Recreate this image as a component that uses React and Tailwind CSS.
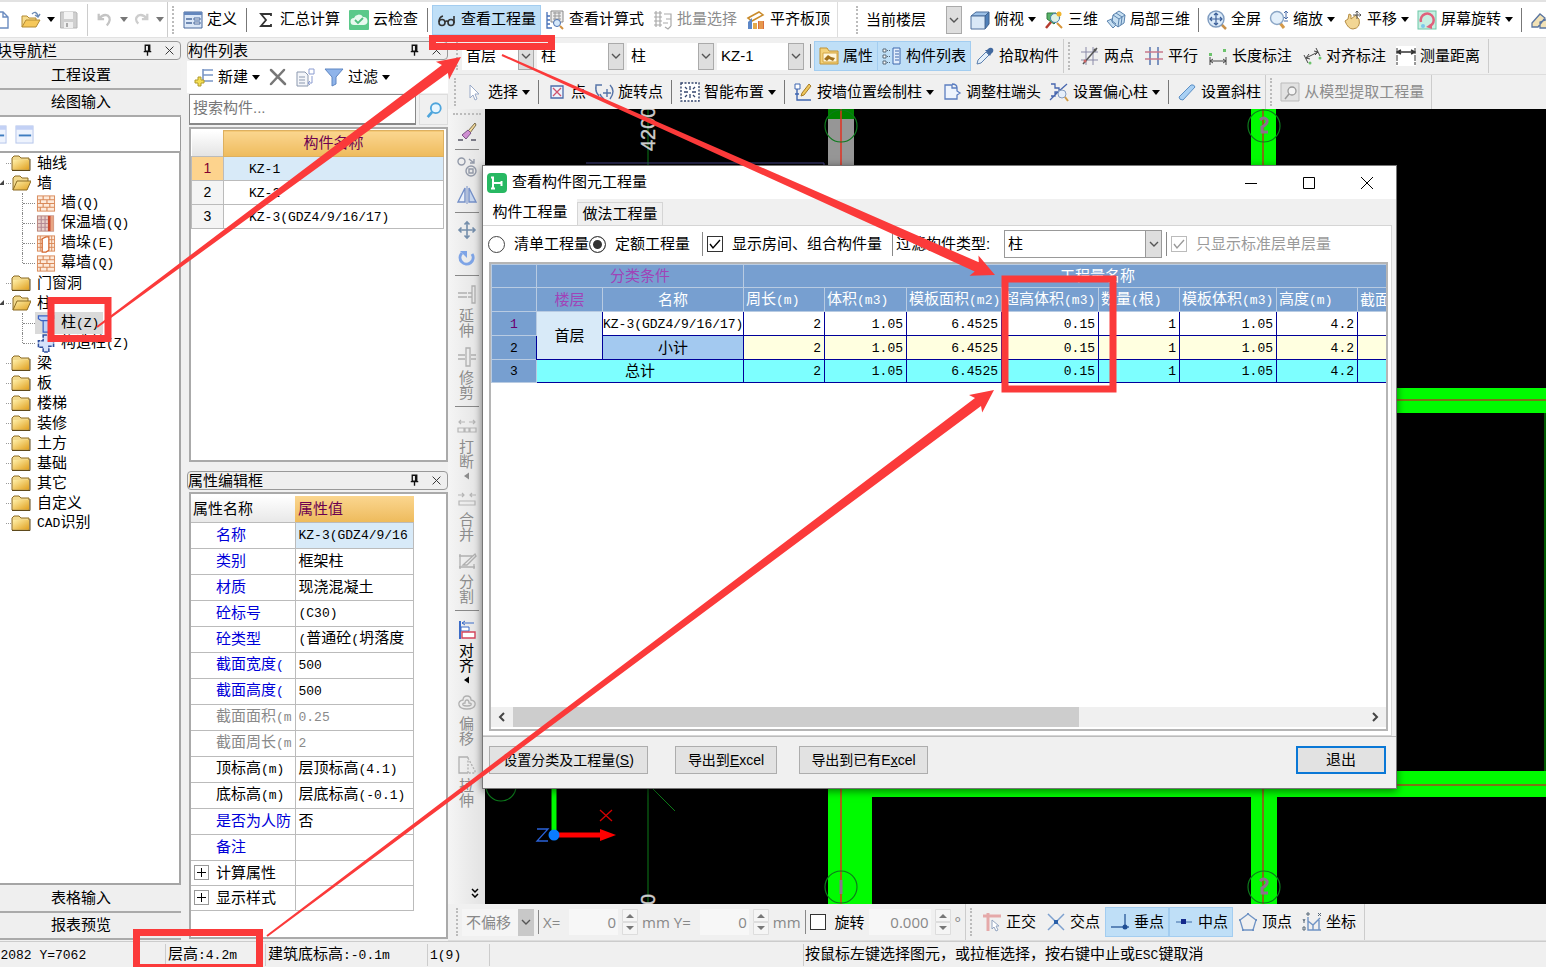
import clsx from 'clsx'

const CJK = 'font-["Liberation_Sans","Noto_Sans_CJK_SC",sans-serif]'
const RED = '#fb3a3a'

// All tool icons are drawn on a 20x20 grid
const ICONS = {
  doc: <path d="M3 2h10l5 5v11H3z M13 2v5h5" fill="#fff" stroke="#6b8cc0" strokeWidth="1.4" />,
  open: (
    <>
      <path d="M1 17V6h5l2 2h7v3" fill="#f7dc8d" stroke="#b48b32" />
      <path d="M1 17l4-7h14l-4 7z" fill="#f6c85a" stroke="#b48b32" />
      <path d="M11 4q4-4 6 2m-3-1l3 2 2-3" fill="none" stroke="#6b8ab5" strokeWidth="1.4" />
    </>
  ),
  save: (
    <>
      <path d="M1.500 2h15l1.500 1v15h-16.500z" fill="#cfcfcf" stroke="#b5b5b5" />
      <path d="M5 2h9v7H5z" fill="#f3f3f3" />
      <path d="M5 12h9v6H5z" fill="#efefef" />
      <path d="M7 13h2v4H7z" fill="#aaa" />
    </>
  ),
  undo: <path d="M3 3v6h6M4 8q4-5 9-3 5 4-1 11" fill="none" stroke="#c4c4c4" strokeWidth="2.500" />,
  redo: <path d="M17 3v6h-6M16 8q-4-5-9-3-5 4 0 9" fill="none" stroke="#cdcdcd" strokeWidth="2.500" />,
  define: (
    <>
      <path d="M1 2h18v16H1z" fill="#dce8f8" stroke="#49699c" />
      <path d="M1 2h18v3H1z" fill="#6487bd" />
      <path d="M3 9h6M3 13h6" stroke="#49699c" strokeWidth="1.500" />
      <path d="M11 8h6v2h-6zM11 12h6v2h-6z" fill="#fff" stroke="#49699c" />
    </>
  ),
  sigma: <path d="M15 6V4H5l5 6-5 6h10v-2" fill="none" stroke="#333" strokeWidth="1.800" />,
  cloud: (
    <>
      <rect width="20" height="20" rx="1" fill="#5bc98a" />
      <path d="M5 15a3.500 3.500 0 0 1 0-7 5 5 0 0 1 9-1 4 4 0 0 1 1 8z" fill="#e9f9ef" />
      <path d="M6 10l3 3 5-5" fill="none" stroke="#4fbf7f" strokeWidth="1.800" />
    </>
  ),
  glasses: (
    <g fill="none" stroke="#333" strokeWidth="1.600">
      <circle cx="5" cy="12.500" r="3" /><circle cx="14" cy="12.500" r="3" />
      <path d="M2 12q0-5 4-6M8 12q2-2 3 0M17 13V6" />
    </g>
  ),
  calc: (
    <>
      <path d="M6 1h12v11H6z" fill="#eee" stroke="#888" />
      <path d="M8 3h8M8 6h8M8 9h8M10 2v9M14 2v9" stroke="#999" />
      <path d="M2 2v16h5M2 6h3M2 10h3M2 14h3" fill="none" stroke="#4670b8" strokeWidth="1.300" />
      <circle cx="12" cy="13" r="3.500" fill="#d5e8fa" stroke="#4a70b0" /><path d="M15 16l3 3" stroke="#d09040" strokeWidth="2" />
    </>
  ),
  batch: <path d="M1 3h8M1 7h8M1 11h8M1 15h8M3 1v16M7 1v16M11 4h7v12m-5-7h5m-8 4h5m-3 4l3 2 3-3" fill="none" stroke="#aaa" strokeWidth="1.200" />,
  slab: (
    <>
      <path d="M2 8l11-6 4 3-11 6z" fill="#fff" stroke="#c98b2c" strokeWidth="1.500" />
      <path d="M2 12l4-4v11H2z" fill="#5c87c8" />
      <path d="M7 13h4v6H7z" fill="#e5a84a" /><path d="M12 11h6v8h-6z" fill="#d96e3d" /><path d="M14 11v8M16 11v8" stroke="#f2c25e" />
    </>
  ),
  cube: (
    <>
      <path d="M1 6l5-4h13l-4 4z" fill="#9cc0e6" stroke="#4c6f9c" />
      <path d="M15 6l4-4v12l-4 5z" fill="#4f7fb8" stroke="#3f628e" />
      <path d="M1 6h14v13H1z" fill="#d9e8f7" stroke="#4c6f9c" />
    </>
  ),
  view3d: (
    <>
      <path d="M3 3h9l4 5-6 6-7-5z" fill="#58b368" stroke="#2f7a3e" />
      <circle cx="11" cy="8" r="4.500" fill="#dff2e3" stroke="#4b7fb3" />
      <circle cx="15" cy="4" r="2.500" fill="#f0b52e" /><path d="M7 12l-5 6" stroke="#b63b2e" strokeWidth="2.500" /><path d="M13 13l5 5" stroke="#d79438" strokeWidth="2" />
    </>
  ),
  part3d: (
    <g stroke="#5b83ae" fill="#c6dff2">
      <path d="M1 11l7-3 5 4-6 6z" /><path d="M7 5l6-4 6 4-1 8-6 4-6-5z" /><path d="M7 5l6 4 6-4M13 9l-1 8M10 3l6 4-1 8M4 9l6 5" fill="none" />
    </g>
  ),
  full: (
    <>
      <path d="M14 14l5 5" stroke="#c8914b" strokeWidth="2.500" />
      <circle cx="9" cy="9" r="8" fill="#dcebf9" stroke="#7f9cc0" strokeWidth="1.400" />
      <path d="M9 3v12M3 9h12M7 5l2-2 2 2M7 13l2 2 2-2M5 7L3 9l2 2M13 7l2 2-2 2" fill="none" stroke="#3b5f99" strokeWidth="1.200" />
    </>
  ),
  zoom: (
    <>
      <path d="M11 13l4 5" stroke="#d59a4a" strokeWidth="3" />
      <circle cx="8" cy="8" r="6.500" fill="#e3effa" stroke="#8ba6c6" strokeWidth="1.400" />
      <path d="M17 1v7M15 3l2-2 2 2M15 11h4M15 7l2 2 2-2" fill="none" stroke="#4a6da8" />
    </>
  ),
  pan: (
    <>
      <path d="M2 11l3-2 1-5 2 1v4l5-4 1 2 2 2q2 9-6 10-5 0-8-8z" fill="#f2d694" stroke="#b58d43" />
      <path d="M14 1v8M10 5h8M12.500 2.500L14 1l1.500 1.500M16.500 3.500L18 5l-1.500 1.500" fill="none" stroke="#555" />
    </>
  ),
  rotateView: (
    <>
      <rect x="1" y="1" width="18" height="18" fill="#c8efe2" stroke="#6cc8a8" />
      <path d="M4 12a6.500 6.500 0 1 1 9 4" fill="none" stroke="#e0627c" strokeWidth="2.500" /><path d="M9 17l6-4v6z" fill="#e0627c" /><circle cx="6" cy="16" r="2" fill="#7cc7ea" />
    </>
  ),
  edit: <path d="M2 13l8-9 5 4-7 9H2zM10 12l8-3v9h-8z" fill="#f2e2b6" stroke="#5a75a0" strokeWidth="1.300" />,
  props: (
    <>
      <path d="M1 2h7l2 3h9v13H1z" fill="#f3d27a" stroke="#c19235" />
      <path d="M4 7h14v9H4z" fill="#fff6da" stroke="#d4a645" /><path d="M5 13l4-4 3 2 4 1-2 3-4-2-2 2z" fill="#a2721c" />
    </>
  ),
  list: (
    <>
      <path d="M1 3h3v3H1zM1 9h3v3H1zM1 15h3v3H1z" fill="#fff" stroke="#567" /><path d="M5 4.500h3M5 10.500h3M5 16.500h3" stroke="#567" strokeDasharray="1 1" />
      <path d="M11 2h7v16h-7z" fill="#e3eefc" stroke="#3e68ad" /><path d="M13 5h4M13 8h4M13 11h4M13 14h4" stroke="#3e68ad" />
    </>
  ),
  pick: (
    <>
      <path d="M2 18l1-4 8-8 3 3-8 8z" fill="#e5f0fa" stroke="#5b7fae" />
      <path d="M10 4l5 6 1-2 2-2q1-3-1-4t-4 1l-1 1z" fill="#42699f" />
    </>
  ),
  twoPt: (
    <>
      <path d="M6 1v18M1 6h17M1 14h17M13 1v18" stroke="#8a8aa8" /><path d="M3 18L17 2" stroke="#555" strokeWidth="1.500" />
      <circle cx="15" cy="4" r="1.500" fill="#555" /><circle cx="5" cy="15" r="1.500" fill="#c66" />
    </>
  ),
  parallel: (
    <>
      <path d="M6 1v18M14 1v18" stroke="#5775b0" strokeWidth="1.500" /><path d="M1 6h18M1 13h18" stroke="#c7788c" strokeWidth="1.500" />
    </>
  ),
  lenDim: (
    <>
      <path d="M2 11v8M18 11v8M2 15h16M5 13l-3 2 3 2M15 13l3 2-3 2" fill="none" stroke="#444" /><path d="M1 7h3v3H1zM15 3h3v3h-3z" fill="#6cc36c" />
    </>
  ),
  alignDim: (
    <>
      <path d="M2 9l4 8M14 2l4 8M4 12l12-6M7 8l-3 4 4 1M13 9l3-3-4-1" fill="none" stroke="#444" /><circle cx="8" cy="17" r="1.500" fill="#6cc36c" /><circle cx="18" cy="12" r="1.500" fill="#6cc36c" />
    </>
  ),
  measure: (
    <>
      <rect width="20" height="20" fill="#fff" /><path d="M1 2v17M19 2v17" stroke="#333" strokeDasharray="6 1" /><path d="M1 6h18M5 4L1 6l4 2M15 4l4 2-4 2" fill="none" stroke="#333" strokeWidth="1.400" />
    </>
  ),
  cursor: <path d="M6 3v13l3-3 2 5 2-1-2-5h4z" fill="#fff" stroke="#9aaac8" />,
  point: (
    <>
      <path d="M4 4h12v12H4z" fill="#eef3fb" stroke="#4c6cab" strokeWidth="1.300" /><path d="M6 6l8 8M14 6l-8 8" stroke="#d0526d" strokeWidth="1.300" />
    </>
  ),
  rotPt: <path d="M2 9V3h6M2 4q-1 6 3 10M9 11h8M13 7v8M16 3q6 6 0 14M10 17q-3-2-4-5" fill="none" stroke="#5674a8" strokeWidth="1.400" />,
  smart: (
    <>
      <rect x="1" y="1" width="18" height="18" fill="#fff" stroke="#34466e" strokeWidth="1.400" strokeDasharray="2 1.500" />
      <path d="M10 4v4M10 12v4M4 10h4M12 10h4M5 5l2 2M15 5l-2 2M5 15l2-2M15 15l-2-2" stroke="#34466e" strokeWidth="1.300" />
    </>
  ),
  byWall: (
    <>
      <path d="M2 2h5v5H2z" fill="#fff" stroke="#3f66b0" /><path d="M4 7v11h14M2 12h4" fill="none" stroke="#3f66b0" strokeWidth="1.400" /><path d="M8 14l1-3 7-9 2 2-7 9z" fill="#f0c75c" stroke="#a77c26" />
    </>
  ),
  adjust: <path d="M3 3h7v3h5v3l3 2-3 2v4H3zM10 2q5 0 5 4" fill="#eef4fd" stroke="#5b7dc0" strokeWidth="1.300" />,
  offsetCol: (
    <>
      <path d="M2 2h4v4h4v4H6v4H2M1 18l8-8 9-8" fill="none" stroke="#4766ae" strokeWidth="1.300" /><circle cx="13" cy="12" r="4" fill="#e6effa" stroke="#849cc0" /><path d="M16 15l3 4" stroke="#d09b48" strokeWidth="2" />
    </>
  ),
  slant: <path d="M2 15L14 3q3-1 4 2L6 18q-4 0-4-3z" fill="#a8d0f4" stroke="#5c8fc4" />,
  extract: (
    <>
      <path d="M1 1h18v18H1z" fill="#e2e2e2" stroke="#bbb" /><circle cx="12" cy="9" r="4" fill="#f4f4f4" stroke="#999" strokeWidth="1.300" /><path d="M9 12l-4 5" stroke="#999" strokeWidth="1.500" />
    </>
  ),
  newItem: (
    <>
      <path d="M9 2v12M9 3h10M9 8h10M9 14h10" fill="none" stroke="#7a96c6" strokeWidth="1.600" /><path d="M4 10h3v3h3v3H7v3H4v-3H1v-3h3z" fill="#f5df55" stroke="#b19a2a" />
    </>
  ),
  del: <path d="M3 3l14 14M16 3L3 17" stroke="#777" strokeWidth="2.500" strokeLinecap="round" />,
  copyItem: (
    <>
      <path d="M1 5h8l3 3v11H1z" fill="#f4f6fa" stroke="#8b98ae" /><path d="M3 10h6M3 13h6M3 16h6" stroke="#8b98ae" /><path d="M13 2h5v5h-5zM16 9v7h-3m1-2l-2 2 2 2" fill="none" stroke="#8b9cd0" />
    </>
  ),
  filter: <path d="M1 2h18l-7 8v7l-4 2v-9z" fill="#8fb4ea" stroke="#5f86c2" />,
  search: (
    <>
      <circle cx="12" cy="8" r="5.500" fill="#e8f6ff" stroke="#4ea5dc" strokeWidth="2" /><path d="M8 12l-5 6" stroke="#4ea5dc" strokeWidth="3" />
    </>
  ),
  collapse: (
    <>
      <rect x="1" y="1" width="18" height="18" fill="#eef3fd" stroke="#b4c4ea" /><rect x="1" y="1" width="18" height="4" fill="#c3d1f5" /><path d="M4 11h13" stroke="#3f7dc0" strokeWidth="2" />
    </>
  ),
  folder: (
    <>
      <path d="M1 17V5l2-2h5l2 2h8v12z" fill="#f1d98e" stroke="#8b6b22" /><path d="M2 7h16v9.500H2z" fill="url(#gold)" /><path d="M1 17.500h18V6" fill="none" stroke="#5e4a1c" />
    </>
  ),
  folderOpen: (
    <>
      <path d="M2 17V5l2-2h5l2 2h6v3" fill="#f1d98e" stroke="#8b6b22" /><path d="M2 17L6 8h14l-4 9z" fill="url(#gold)" stroke="#8b6b22" />
    </>
  ),
  brick: (
    <>
      <rect x="1" y="2" width="18" height="16" fill="#fdeadb" stroke="#d98a5a" /><path d="M1 6h18M1 10h18M1 14h18M7 2v4M14 2v4M4 6v4M11 6v4M7 10v4M14 10v4M4 14v4M11 14v4" stroke="#d98a5a" strokeWidth="1.200" />
    </>
  ),
  brickWarm: (
    <>
      <rect x="1" y="2" width="17" height="16" fill="#e9cfc8" stroke="#b98377" /><path d="M1 6h11M1 10h11M1 14h11M5 2v16M9 2v16" stroke="#b58a94" strokeWidth="1.200" /><path d="M12 2h3v16h-3z" fill="#c9492c" /><path d="M15 2h3v16h-3z" fill="#e8a583" />
    </>
  ),
  pier: (
    <>
      <rect x="1" y="2" width="18" height="16" fill="#fdeadb" stroke="#d98a5a" /><path d="M1 6h18M1 10h18M1 14h18M4 2v16M16 2v16" stroke="#d98a5a" /><path d="M6 5l4-2h3v14l-3 2H6z" fill="#fff" stroke="#d4662e" strokeWidth="1.300" />
    </>
  ),
  column: <path d="M2 2h16v3l-3 2H5L2 5zM7 7h6v12H7z" fill="#bcd2f8" stroke="#3b62c4" strokeWidth="1.300" />,
  tieColumn: <path d="M7 1h6v5h5v7h-5v6H7v-5H2V7h5z" fill="#d6e3fb" stroke="#2f4f9e" strokeWidth="1.600" strokeDasharray="4 1" />,
  brush: (
    <>
      <path d="M11 9l7-8 1 2-6 8z" fill="#f3d99b" stroke="#776a4a" /><path d="M5 13l6-5 3 3-5 6z" fill="#cf8fd2" stroke="#7a5585" /><path d="M1 18h5M14 18h5" stroke="#556" strokeWidth="1.500" />
    </>
  ),
  copy: (
    <g fill="none" stroke="#9299a8" strokeWidth="1.400">
      <circle cx="4.500" cy="4.500" r="3.500" /><path d="M12 2l5 4m0-4v4h-4" /><circle cx="14" cy="14" r="5" /><path d="M12 12h4v4h-4z" />
    </g>
  ),
  mirror: (
    <>
      <path d="M8 3v14H1z" fill="#eaf0fa" stroke="#7590c8" strokeWidth="1.400" /><path d="M12 3v14h7z" fill="#c7d6ee" stroke="#7590c8" strokeWidth="1.400" /><path d="M10 1v18" stroke="#7590c8" />
    </>
  ),
  move: <path d="M10 2v16M2 10h16M7.500 4.500L10 2l2.500 2.500M7.500 15.500L10 18l2.500-2.500M4.500 7.500L2 10l2.500 2.500M15.500 7.500L18 10l-2.500 2.500" fill="none" stroke="#748eab" strokeWidth="1.600" />,
  rotate: (
    <>
      <path d="M5 5a6.500 6.500 0 1 0 10 1" fill="none" stroke="#7ea4e6" strokeWidth="3" /><path d="M3 3h7v7z" fill="#7ea4e6" />
    </>
  ),
  extend: <path d="M1 8h9M1 12h9M15 1h3v17h-3zM11 8h4M11 12h4" fill="none" stroke="#b0b0b0" strokeWidth="1.300" />,
  trim: <path d="M1 8h7M1 12h7M9 1h4v18H9zM14 8h5M14 12h5" fill="none" stroke="#b0b0b0" strokeWidth="1.300" />,
  break: <path d="M1 12h6v4H1zM8 12h4v4H8zM13 12h6v4h-6zM2 6h6M4 4L2 6l2 2M12 6h6M16 4l2 2-2 2" fill="none" stroke="#b5b5b5" strokeWidth="1.200" />,
  merge: <path d="M2 12h16v4H2zM1 6h6M5 4l2 2-2 2M19 6h-6M15 4l-2 2 2 2" fill="none" stroke="#b5b5b5" strokeWidth="1.200" />,
  split: <path d="M2 5h14M2 16h16M3 3v15M17 13v5M6 14L18 3l1 2-9 9z" fill="none" stroke="#b0b0b0" strokeWidth="1.300" />,
  align: (
    <>
      <path d="M3 1v18" stroke="#3c6cc8" strokeWidth="2" /><path d="M5 3h12M8 1L5 3l3 2" fill="none" stroke="#3c6cc8" /><path d="M4 7h8v4H4z" fill="#fff" stroke="#3c6cc8" /><path d="M5 12h13v6H5z" fill="#fff" stroke="#d5455c" strokeWidth="1.400" />
    </>
  ),
  offset: <path d="M10 3q4 0 4 4 5 1 4 5-1 4-8 4t-8-4q-1-4 4-5 0-4 4-4zM10 7q2 0 2 3 3 0 2 2-1 1-4 1t-4-1q-1-2 2-2 0-3 2-3z" fill="none" stroke="#b0b0b0" strokeWidth="1.300" />,
  stretch: (
    <g fill="none" stroke="#b0b0b0" strokeWidth="1.300">
      <path d="M11 2H2v16h9" /><path d="M11 2v16M11 3l7 13v2h-7" strokeDasharray="2 1.500" />
    </g>
  ),
  ortho: (
    <>
      <path d="M1 4h18M6 1v18" stroke="#e5a9a9" strokeWidth="3" /><path d="M10 8v9l2-2 2 4 2-1-2-4h3z" fill="#fff" stroke="#93a5c0" />
    </>
  ),
  cross: (
    <>
      <path d="M2 2l16 16M18 2L2 18" stroke="#7da0cf" strokeWidth="1.500" /><rect x="8" y="8" width="4" height="4" fill="#2a5fa8" />
    </>
  ),
  foot: (
    <>
      <path d="M1 15h18M15 2v13" stroke="#3d6aa5" strokeWidth="1.500" /><circle cx="15" cy="15" r="2.500" fill="#1f4f95" />
    </>
  ),
  mid: (
    <>
      <path d="M2 10h16" stroke="#3d6aa5" /><rect x="7" y="7" width="5" height="5" fill="#142a8c" />
    </>
  ),
  vertex: (
    <>
      <path d="M10 2l8 6-3 10H5L2 8z" fill="none" stroke="#6f93c4" strokeWidth="1.300" /><path d="M9 1h2v2H9zM1 7h2v2H1zM17 7h2v2h-2zM4 17h2v2H4zM14 17h2v2h-2z" fill="#6f93c4" />
    </>
  ),
  coord: (
    <>
      <path d="M6 5v13h13M6 9l5 4 7-7M11 18v-5M17 18V8" fill="none" stroke="#6f93c4" strokeWidth="1.400" /><path d="M5 1h2v2H5zM16 1l3 3M19 1l-3 3M1 7l1 2 1-2M2 9v2M1 15h2v3H1z" fill="none" stroke="#567" />
    </>
  ),
  pin: <path d="M7 3h6v8H7zM11.500 3v8M5 11.500h10M10 12v5" fill="none" stroke="#111" strokeWidth="1.800" />,
  close: <path d="M4 4l12 12M16 4L4 16" stroke="#333" strokeWidth="1.500" />,
}

function Icon({ name, className = 'size-5' }) {
  return <svg viewBox="0 0 20 20" className={clsx('shrink-0', className)} aria-hidden="true">{ICONS[name]}</svg>
}

function Caret() {
  return <svg viewBox="0 0 8 5" className="h-[5px] w-2 shrink-0"><path d="M0 0h8L4 5z" fill="currentColor" /></svg>
}

function Chevron() {
  return <svg viewBox="0 0 10 6" className="h-[6px] w-[10px]"><path d="M1 1l4 4 4-4" fill="none" stroke="#555" strokeWidth="1.400" /></svg>
}

// Half-width characters are set in a narrower mono face than the Chinese ones
function Mix({ children }) {
  return children.split(/([\x20-\x7e]+)/).map((part, i) =>
    i % 2
      ? <span key={i} className='font-["Liberation_Mono",monospace] text-[13px]'>{part}</span>
      : part
  )
}

function Tool({ icon, label, menu, active, disabled }) {
  return (
    <button
      disabled={disabled}
      className={clsx(
        'flex h-[28px] shrink-0 items-center gap-1 px-1 whitespace-nowrap',
        active && 'bg-[#bfdff7] outline outline-[#a3cdf0]',
        disabled && 'text-[#8c8c8c]'
      )}
    >
      <Icon name={icon} />
      {label}
      {menu && <Caret />}
    </button>
  )
}

function Sep() {
  return <div className="flex w-[9px] shrink-0 justify-center"><div className="h-6 w-px bg-[#777]" /></div>
}

function Grip() {
  return <div className="mx-1 h-7 w-0 shrink-0 border-l-2 border-dotted border-[#bbb]" />
}

function Combo({ label, value, className, disabled }) {
  return (
    <div className={clsx('relative shrink-0', className)}>
      <select
        aria-label={label}
        disabled={disabled}
        className={clsx(
          'h-full w-full appearance-none pl-1 leading-5',
          disabled ? 'bg-[#f5f5f5] text-[#888]' : 'bg-white text-black'
        )}
      >
        <option>{value}</option>
      </select>
      <span
        className={clsx(
          'pointer-events-none absolute inset-y-0 right-0 flex w-4 items-center justify-center border',
          disabled ? 'border-[#c8c8c8] bg-[#c8c8c8]' : 'border-[#aaa] bg-[#dedede]'
        )}
      >
        <Chevron />
      </span>
    </div>
  )
}

function PanelTitle({ children }) {
  return (
    <div className="flex h-[19px] items-center rounded-sm border border-[#999] bg-[#efefef] leading-[17px]">
      <span className="flex-1">{children}</span>
      <button aria-label="固定" className="mr-2"><Icon name="pin" className="size-[15px]" /></button>
      <button aria-label="关闭" className="mr-1"><Icon name="close" className="size-[13px]" /></button>
    </div>
  )
}

function TopToolbar() {
  return (
    <header className="flex h-[38px] shrink-0 items-center overflow-hidden border-y border-t-2 border-[#e2e2e2] bg-white">
      <div className="flex h-full w-[168px] shrink-0 items-center border-r border-[#ccc]">
        <button aria-label="新建" className="-ml-[10px]"><Icon name="doc" /></button>
        <button aria-label="打开" className="ml-[11px] flex items-center gap-[6px]"><Icon name="open" /><Caret /></button>
        <button aria-label="保存" className="ml-1"><Icon name="save" /></button>
        <div className="mx-2 h-8 w-px bg-[#ccc]" />
        <button aria-label="撤销" className="flex items-center gap-[6px] text-[#777]"><Icon name="undo" className="size-[18px]" /><Caret /></button>
        <button aria-label="恢复" className="ml-1 flex items-center gap-[6px] text-[#777]"><Icon name="redo" className="size-[18px]" /><Caret /></button>
      </div>
      <div className="flex h-full w-[670px] shrink-0 items-center gap-px border-r border-[#ddd]">
        <Grip />
        <Tool icon="define" label="定义" />
        <Sep />
        <Tool icon="sigma" label="汇总计算" />
        <Tool icon="cloud" label="云检查" />
        <Sep />
        <Tool icon="glasses" label="查看工程量" active />
        <Tool icon="calc" label="查看计算式" />
        <Tool icon="batch" label="批量选择" disabled />
        <Tool icon="slab" label="平齐板顶" />
      </div>
      <div className="flex items-center pl-[14px]">
        <Grip />
        <Combo label="楼层范围" value="当前楼层" className="mr-1 h-[28px] w-[100px]" />
        <Tool icon="cube" label="俯视" menu />
        <Tool icon="view3d" label="三维" />
        <Tool icon="part3d" label="局部三维" />
        <Sep />
        <Tool icon="full" label="全屏" />
        <Tool icon="zoom" label="缩放" menu />
        <Tool icon="pan" label="平移" menu />
        <Tool icon="rotateView" label="屏幕旋转" menu />
        <Sep />
        <Tool icon="edit" />
      </div>
    </header>
  )
}

const TREE = [
  { label: '轴线' },
  { label: '墙', items: [['brick', '墙(Q)'], ['brickWarm', '保温墙(Q)'], ['pier', '墙垛(E)'], ['brick', '幕墙(Q)']] },
  { label: '门窗洞' },
  { label: '柱', items: [['column', '柱(Z)', true], ['tieColumn', '构造柱(Z)']] },
  { label: '梁' }, { label: '板' }, { label: '楼梯' }, { label: '装修' }, { label: '土方' },
  { label: '基础' }, { label: '其它' }, { label: '自定义' }, { label: 'CAD识别' },
]

function NavPanel() {
  const bar = 'h-[27px] shrink-0 border-b-2 border-[#aaa] bg-[#efefef] text-center'
  return (
    <nav className="w-[182px] shrink-0 overflow-hidden">
      <div className="-ml-[19px] flex h-full w-[200px] flex-col pt-[3px]">
        <PanelTitle>模块导航栏</PanelTitle>
        <button className={clsx(bar, 'mt-[3px]')}>工程设置</button>
        <button className={bar}>绘图输入</button>
        <div className="flex h-[34px] shrink-0 items-center gap-2 border-r border-[#999] bg-white pl-[7px]">
          <button aria-label="展开"><Icon name="collapse" className="size-[19px]" /></button>
          <button aria-label="折叠"><Icon name="collapse" className="size-[19px]" /></button>
        </div>
        <ul className="min-h-0 flex-1 border-2 border-[#a5a5a5] bg-white leading-5">
          {TREE.map(({ label, items }) => (
            <li key={label}>
              <div className="flex h-5 items-center pl-[15px]">
                <svg viewBox="0 0 8 8" className="size-2">{items && <path d="M1 6h5V1z" fill="#444" />}</svg>
                <span className="w-[5px] border-t border-dotted border-[#999]" />
                <Icon name={items ? 'folderOpen' : 'folder'} />
                <span className="pl-[6px]"><Mix>{label}</Mix></span>
              </div>
              {items && (
                <ul className="ml-[39px]">
                  {items.map(([icon, text, selected], i) => (
                    <li key={text} className="flex h-5 items-center">
                      <span className={clsx('border-l border-dotted border-[#888]', i === items.length - 1 ? 'h-[10px] self-start' : 'h-5')} />
                      <span className="w-3 border-t border-dotted border-[#888]" />
                      <span className={clsx('flex items-center gap-[5px] pr-1 pl-px', selected && 'bg-[#dadada]')}>
                        <Icon name={icon} className="h-[19px] w-5" />
                        <span><Mix>{text}</Mix></span>
                      </span>
                    </li>
                  ))}
                </ul>
              )}
            </li>
          ))}
        </ul>
        <button className={clsx(bar, 'mt-px')}>表格输入</button>
        <button className={clsx(bar, 'mb-px')}>报表预览</button>
      </div>
    </nav>
  )
}

const PROPS = [
  ['名称', 'KZ-3(GDZ4/9/16', 'key'],
  ['类别', '框架柱', 'key'],
  ['材质', '现浇混凝土', 'key'],
  ['砼标号', '(C30)', 'key'],
  ['砼类型', '(普通砼(坍落度', 'key'],
  ['截面宽度(', '500', 'key'],
  ['截面高度(', '500', 'key'],
  ['截面面积(m', '0.25', 'off'],
  ['截面周长(m', '2', 'off'],
  ['顶标高(m)', '层顶标高(4.1)'],
  ['底标高(m)', '层底标高(-0.1)'],
  ['是否为人防', '否', 'key'],
  ['备注', '', 'key'],
]

function ListPanel() {
  return (
    <aside className="ml-[5px] flex w-[261px] shrink-0 flex-col pt-[3px]">
      <PanelTitle>构件列表</PanelTitle>
      <div className="mt-px flex h-[32px] shrink-0 items-center bg-white pl-[3px]">
        <Tool icon="newItem" label="新建" menu />
        <Tool icon="del" />
        <Tool icon="copyItem" />
        <Tool icon="filter" label="过滤" menu />
      </div>
      <div className="flex h-[32px] shrink-0 gap-[3px] pt-px pl-[2px]">
        <input aria-label="搜索构件" placeholder="搜索构件..." className="h-[31px] w-[227px] border border-b-2 border-[#888] bg-white pb-[3px] pl-[3px] placeholder:text-[#777]" />
        <button aria-label="搜索" className="flex flex-1 items-center justify-center border border-[#ddd]"><Icon name="search" className="size-[18px]" /></button>
      </div>
      <div className="mt-[2px] ml-[2px] h-[335px] shrink-0 border-2 border-[#aaa] bg-white pt-px">
        <table className="w-[253px] table-fixed border-collapse">
          <thead>
            <tr className="h-[26px]">
              <th className="w-8 bg-linear-to-b from-white to-[#e4e4e4]" />
              <th className="border border-[#ddb060] bg-linear-to-b from-[#fbd68f] to-[#eebb5c] p-0 font-normal text-[#6b0050]">构件名称</th>
            </tr>
          </thead>
          <tbody>
            {['KZ-1', 'KZ-2', 'KZ-3(GDZ4/9/16/17)'].map((name, i) => (
              <tr key={name} className="h-[24px]">
                <td className={clsx('border border-[#bbb] p-0 text-center font-["Liberation_Sans"] text-[14px]', i === 0 ? 'bg-[#fdd38d] text-[#800030]' : 'bg-[#f4f4f4]')}>{i + 1}</td>
                <td className={clsx('border border-[#bbb] p-0 pl-[25px] leading-5', i === 0 && 'bg-[#d8eaf8]')}><Mix>{name}</Mix></td>
              </tr>
            ))}
          </tbody>
        </table>
      </div>
      <div className="mt-[9px]"><PanelTitle>属性编辑框</PanelTitle></div>
      <div className="mt-[2px] mb-[2px] ml-[2px] min-h-0 flex-1 overflow-hidden border-2 border-[#aaa] bg-white pt-[2px]">
        <table className="w-[223px] table-fixed border-collapse leading-5">
          <thead>
            <tr className="h-[26px] text-left">
              <th className="w-[104px] bg-linear-to-b from-white to-[#e8e8e8] p-0 pl-[2px] font-normal">属性名称</th>
              <th className="bg-linear-to-b from-[#fbd68f] to-[#eebb5c] p-0 pl-[3px] font-normal text-[#6b0050]">属性值</th>
            </tr>
          </thead>
          <tbody>
            {PROPS.map(([name, value, kind], i) => (
              <tr key={name} className={clsx('h-[26px]', kind === 'off' && 'text-[#8a8a8a]')}>
                <td className={clsx('overflow-hidden border border-l-0 border-[#bbb] p-0 pl-[25px] whitespace-nowrap', kind === 'key' && 'text-[#0000d8]')}><Mix>{name}</Mix></td>
                <td className={clsx('overflow-hidden border border-[#bbb] p-0 pl-[3px] whitespace-nowrap', i === 0 && 'bg-[#d8eaf8]')}><Mix>{value}</Mix></td>
              </tr>
            ))}
            {['计算属性', '显示样式'].map(name => (
              <tr key={name} className="h-[25px]">
                <td className="border border-l-0 border-[#bbb] p-0 pl-[3px]">
                  <div className="flex items-center gap-[7px]">
                    <button aria-label={'展开' + name} className="flex size-[15px] items-center justify-center border border-[#999]">
                      <svg viewBox="0 0 9 9" className="size-[9px]"><path d="M0 4.500h9M4.500 0v9" stroke="#000" /></svg>
                    </button>
                    {name}
                  </div>
                </td>
                <td className="border border-[#bbb]" />
              </tr>
            ))}
          </tbody>
        </table>
      </div>
    </aside>
  )
}

function DrawBars() {
  return (
    <>
      <div className="flex h-9 shrink-0 items-center pl-1">
        <div className="flex h-[34px] items-center border-r border-[#ccc]">
          <Grip />
          <div className="flex gap-[3px] pr-[2px]">
            <Combo label="楼层" value="首层" className="h-[27px] w-[72px]" />
            <Combo label="构件类别" value="柱" className="h-[27px] w-[87px]" />
            <Combo label="构件类型" value="柱" className="h-[27px] w-[87px]" />
            <Combo label="构件" value="KZ-1" className="h-[27px] w-[87px]" />
          </div>
          <Sep />
          <div className="flex gap-px">
            <Tool icon="props" label="属性" active />
            <Tool icon="list" label="构件列表" active />
            <Tool icon="pick" label="拾取构件" />
          </div>
        </div>
        <div className="flex h-[34px] items-center gap-[2px] border-r border-[#ccc] pr-1">
          <Grip />
          <Tool icon="twoPt" label="两点" />
          <Tool icon="parallel" label="平行" />
          <Tool icon="lenDim" label="长度标注" />
          <Tool icon="alignDim" label="对齐标注" />
          <Tool icon="measure" label="测量距离" />
        </div>
      </div>
      <div className="flex h-[35px] shrink-0 items-center border-t border-[#ddd] pl-[2px]">
        <Grip />
        <Tool icon="cursor" label="选择" menu />
        <Sep />
        <Tool icon="point" label="点" />
        <Tool icon="rotPt" label="旋转点" />
        <Sep />
        <Tool icon="smart" label="智能布置" menu />
        <Sep />
        <Tool icon="byWall" label="按墙位置绘制柱" menu />
        <Tool icon="adjust" label="调整柱端头" />
        <Tool icon="offsetCol" label="设置偏心柱" menu />
        <Sep />
        <Tool icon="slant" label="设置斜柱" />
        <div className="flex h-full items-center border-x border-[#ccc] pr-[3px]">
          <Grip />
          <Tool icon="extract" label="从模型提取工程量" disabled />
        </div>
      </div>
    </>
  )
}

const STRIP = [
  ['brush'], null, ['copy'], ['mirror'], null, ['move'], ['rotate'], null,
  ['extend', '延伸'], ['trim', '修剪'], null,
  ['break', '打断', true], ['merge', '合并'], ['split', '分割'], null,
  ['align', '对齐', true], ['offset', '偏移'], ['stretch', '拉伸'],
]

function EditStrip() {
  return (
    <div className="flex w-[37px] shrink-0 flex-col items-center bg-linear-to-r from-[#f5f5f5] to-[#e2e2e2]">
      <div className="mt-1 mb-[3px] h-0 w-7 border-t-2 border-dotted border-[#bbb]" />
      {STRIP.map((item, i) => {
        if (!item) return <div key={i} className="flex h-[7px] w-6 items-center"><div className="h-px w-full bg-[#888]" /></div>
        const [icon, label, menu] = item
        if (!label) return <button key={i} aria-label={icon} className="flex h-7 items-center"><Icon name={icon} /></button>
        return (
          <button key={i} className={clsx('flex w-5 flex-col items-center pt-[6px] pb-[3px] leading-[15px]', icon === 'align' ? 'text-black' : 'text-[#8c8c8c]')}>
            <Icon name={icon} className="mb-[3px] size-5" />
            <span className="w-[15px] break-all">{label}</span>
            {menu && <svg viewBox="0 0 5 7" className="mt-[3px] h-2 w-[5px]"><path d="M5 0v7L0 3.500z" fill="currentColor" /></svg>}
          </button>
        )
      })}
      <button aria-label="更多" className="mt-auto mb-[6px] ml-4">
        <svg viewBox="0 0 8 10" className="h-[10px] w-2"><path d="M1 1l3 3 3-3M1 6l3 3 3-3" fill="none" stroke="#000" strokeWidth="1.500" /></svg>
      </button>
    </div>
  )
}

function Drawing() {
  return (
    <svg className="absolute inset-0 h-full w-full bg-black">
      <g transform="translate(-485 -109)">
        <path d="M648 109V904M653 789L675 811" stroke="#0c7a18" strokeWidth="1" />
        <path d="M586 163H824V170" fill="none" stroke="#46468c" />
        <path d="M828 109h26v10h-26z" fill="#008200" />
        <path d="M828 119h26v50h-26z" fill="#969696" />
        <path d="M1251 109h25v60h-25zM1390 388h160v25h-160zM1390 771h160v26h-160zM828 780h44v124h-44zM828 780h600v17h-600zM1251 780h26v124h-26z" fill="#00fb00" />
        <path d="M1545 413v358" stroke="#00b400" />
        <path d="M841 109V904" stroke="#e03020" strokeWidth="1.500" />
        <path d="M1263 109V904M1390 400h160M1390 785h160" stroke="#a8461e" strokeWidth="1.500" />
        <g fill="none" stroke="#0d7a1c" strokeWidth="1.200">
          <circle cx="841" cy="126" r="16" /><circle cx="1264" cy="126" r="16" />
          <circle cx="841" cy="887" r="16" /><circle cx="1264" cy="887" r="16" /><circle cx="501" cy="786" r="15" />
        </g>
        <g fill="none" stroke="#8d708d" strokeWidth="3">
          <path d="M1260 120q4-4 7 0 1 4-5 7v5h6M1260 881q4-4 7 0 1 4-5 7v5h6M841 880v14" />
        </g>
        <text transform="translate(655 151) rotate(-90)" fill="#ccc" stroke="#ccc" strokeWidth="0.4" fontSize="20" fontFamily="Liberation Sans">4200</text>
        <text transform="translate(655 905) rotate(-90)" fill="#ccc" stroke="#ccc" strokeWidth="0.4" fontSize="20" fontFamily="Liberation Sans">0</text>
        <path d="M554 789v42" stroke="#00fb00" strokeWidth="5" />
        <path d="M559 835h44" stroke="#f00" strokeWidth="5" /><path d="M600 829l16 6-16 6z" fill="#f00" />
        <circle cx="554" cy="835" r="5.500" fill="#0a7cff" />
        <path d="M537 829h11l-11 12h11" fill="none" stroke="#2a62d8" strokeWidth="1.300" />
        <path d="M600 810l12 11M612 810l-12 11" stroke="#d40000" strokeWidth="1.300" />
      </g>
    </svg>
  )
}

const COLS = ['周长(m)', '体积(m3)', '模板面积(m2)', '超高体积(m3)', '数量(根)', '模板体积(m3)', '高度(m)', '截面']
const VALUES = ['2', '1.05', '6.4525', '0.15', '1', '1.05', '4.2', '']

function Values({ className }) {
  return VALUES.map((v, i) => (
    <td key={i} className={clsx('border border-[#00009a] p-0 pr-[3px] text-right', className)}><Mix>{v}</Mix></td>
  ))
}

function QuantityTable() {
  const head = 'border border-[#b8cbe2] p-0 font-normal whitespace-nowrap overflow-hidden'
  const num = 'border border-[#b8cbe2] bg-[#779fd0] p-0 text-center'
  return (
    <table className="w-[960px] table-fixed border-collapse leading-5">
      <colgroup>
        <col className="w-[45px]" /><col className="w-[66px]" /><col className="w-[141px]" />
        <col className="w-[81px]" /><col className="w-[82px]" /><col className="w-[95px]" />
        <col className="w-[97px]" /><col className="w-[81px]" /><col className="w-[97px]" />
        <col className="w-[81px]" /><col className="w-[94px]" />
      </colgroup>
      <thead className="bg-[#779fd0] text-white">
        <tr className="h-[23px]">
          <th className={head} />
          <th className={clsx(head, 'text-[#a044b8]')} colSpan={2}>分类条件</th>
          <th className={head} colSpan={8}>工程量名称</th>
        </tr>
        <tr className="h-[24px]">
          <th className={head} />
          <th className={clsx(head, 'text-[#a044b8]')}>楼层</th>
          <th className={head}>名称</th>
          {COLS.map(c => <th key={c} className={clsx(head, 'pl-[2px] text-left')}><Mix>{c}</Mix></th>)}
        </tr>
      </thead>
      <tbody>
        <tr className="h-[24px]">
          <td className={clsx(num, 'text-[#6b0070]')}><Mix>1</Mix></td>
          <td rowSpan={2} className="border border-[#00009a] bg-[#d8eaf8] p-0 text-center">首层</td>
          <td className="overflow-hidden border border-[#00009a] p-0 whitespace-nowrap"><Mix>KZ-3(GDZ4/9/16/17)</Mix></td>
          <Values />
        </tr>
        <tr className="h-[24px]">
          <td className={num}><Mix>2</Mix></td>
          <td className="border border-[#00009a] bg-[#a3c9f0] p-0 text-center">小计</td>
          <Values className="bg-[#ffffe0]" />
        </tr>
        <tr className="h-[23px]">
          <td className={num}><Mix>3</Mix></td>
          <td colSpan={2} className="border border-[#00009a] bg-[#7dffff] p-0 text-center">总计</td>
          <Values className="bg-[#7dffff]" />
        </tr>
      </tbody>
    </table>
  )
}

function Radio({ label, checked }) {
  return (
    <label className="flex items-center gap-[9px]">
      <input type="radio" name="quota" defaultChecked={checked} className="size-[17px] appearance-none rounded-full border border-[#444] bg-white checked:bg-[#333] checked:shadow-[inset_0_0_0_3px_white]" />
      {label}
    </label>
  )
}

function Check({ label, checked, disabled }) {
  return (
    <label className={clsx('relative flex items-center gap-[9px]', disabled && 'text-[#9a9a9a]')}>
      <input type="checkbox" defaultChecked={checked} disabled={disabled} className="size-4 appearance-none border border-[#333] bg-white disabled:border-[#bbb]" />
      {checked && <svg viewBox="0 0 16 16" className="pointer-events-none absolute left-0 size-4"><path d="M3 8l3 4 7-8" fill="none" stroke="currentColor" strokeWidth="1.400" /></svg>}
      {label}
    </label>
  )
}

function QuantityDialog() {
  const btn = 'h-[28px] border border-[#adadad] bg-[#e2e2e2] text-[14px]'
  return (
    <div role="dialog" aria-label="查看构件图元工程量" className="absolute top-[56px] -left-[3px] z-10 flex h-[624px] w-[915px] flex-col border border-[#777] bg-[#f0f0f0] shadow-[0_2px_8px_rgba(0,0,0,0.5)]">
      <div className="flex h-[33px] shrink-0 items-center bg-white pl-1">
        <svg viewBox="0 0 20 20" className="size-5"><rect width="20" height="20" rx="4" fill="#27b862" /><path d="M6 4v12M6 10h9M14.500 8v5M4 15.500h4M4 4.500h3" stroke="#fff" strokeWidth="2" /></svg>
        <span className="flex-1 pl-[5px]">查看构件图元工程量</span>
        <div className="flex gap-[46px] pr-[23px]">
          <button aria-label="最小化"><svg viewBox="0 0 12 12" className="size-3"><path d="M0 6.500h12" stroke="#000" /></svg></button>
          <button aria-label="最大化"><svg viewBox="0 0 12 12" className="size-3"><path d="M.5.5h11v11H.5z" fill="none" stroke="#000" /></svg></button>
          <button aria-label="关闭窗口"><svg viewBox="0 0 12 12" className="size-3"><path d="M0 0l12 12M12 0L0 12" stroke="#000" /></svg></button>
        </div>
      </div>
      <div role="tablist" className="flex h-[26px] shrink-0 items-end">
        <button role="tab" aria-selected="true" className="h-[26px] w-[94px] bg-white">构件工程量</button>
        <button role="tab" aria-selected="false" className="h-[23px] w-[86px] border border-b-0 border-[#d5d5d5]">做法工程量</button>
      </div>
      <div className="mr-1 flex min-h-0 flex-1 flex-col border-y border-r border-[#d5d5d5] bg-white pb-1">
        <div className="flex h-9 shrink-0 items-center pl-[5px]">
          <Radio label="清单工程量" />
          <Radio label="定额工程量" checked />
          <div className="mr-1 ml-3 h-6 w-px bg-[#888]" />
          <Check label="显示房间、组合构件量" checked />
          <div className="mr-[3px] ml-[10px] h-6 w-px bg-[#888]" />
          <label htmlFor="type-filter" className="w-[108px]">过滤构件类型:</label>
          <div className="relative h-[28px] w-[158px]">
            <select id="type-filter" className="h-full w-full appearance-none border border-[#999] bg-white pl-[3px]"><option>柱</option></select>
            <span className="pointer-events-none absolute inset-y-px right-px flex w-4 items-center justify-center border-l border-[#999] bg-[#dedede]"><Chevron /></span>
          </div>
          <div className="mx-1 h-6 w-px bg-[#888]" />
          <Check label="只显示标准层单层量" checked disabled />
        </div>
        <div className="mr-[3px] ml-[6px] flex min-h-0 flex-1 flex-col border-2 border-[#b5b5b5]">
          <div className="min-h-0 flex-1 overflow-hidden"><QuantityTable /></div>
          <div className="mb-[2px] flex h-[20px] shrink-0 items-center bg-[#f0f0f0]">
            <svg viewBox="0 0 8 10" className="mx-[7px] h-[10px] w-2"><path d="M6 1L2 5l4 4" fill="none" stroke="#444" strokeWidth="2" /></svg>
            <div className="h-full w-[566px] bg-[#cdcdcd]" />
            <svg viewBox="0 0 8 10" className="mr-[7px] ml-auto h-[10px] w-2"><path d="M2 1l4 4-4 4" fill="none" stroke="#444" strokeWidth="2" /></svg>
          </div>
        </div>
      </div>
      <div className="flex h-[52px] shrink-0 items-start border-t border-[#bbb] pt-[9px] pr-[10px] pl-[6px]">
        <button className={clsx(btn, 'w-[159px]')}>设置分类及工程量(<u>S</u>)</button>
        <button className={clsx(btn, 'ml-[27px] w-[102px]')}>导出到<u>E</u>xcel</button>
        <button className={clsx(btn, 'ml-[22px] w-[129px]')}>导出到已有E<u>x</u>cel</button>
        <button className="ml-auto h-[28px] w-[90px] border-2 border-[#0a78d6] bg-[#e2e2e2]">退出</button>
      </div>
    </div>
  )
}

function Spin({ label, value, className }) {
  return (
    <div className="flex items-center gap-1">
      <input aria-label={label} disabled defaultValue={value} className={clsx('h-[26px] bg-[#f7f7f7] pr-[2px] text-right text-[#888]', className)} />
      <svg viewBox="0 0 16 26" className="h-[26px] w-4"><path d="M.5.5h15v12H.5zM.5 13.500h15v12H.5z" fill="#f5f5f5" stroke="#ddd" /><path d="M4 9h8L8 5zM4 17h8l-4 4z" fill="#777" /></svg>
    </div>
  )
}

function SnapBar() {
  return (
    <div className="flex h-[37px] shrink-0 items-center border-b border-[#ddd] pl-1">
      <Grip />
      <div className='flex w-[503px] shrink-0 items-center gap-1 font-["Open_Sans","Noto_Sans_CJK_SC",sans-serif] text-[#888]'>
        <Combo label="偏移方式" value="不偏移" className="h-[27px] w-[72px]" disabled />
        <div className="h-6 w-px bg-[#888]" />
        <span className="w-[22px]">X=</span>
        <Spin label="X 偏移" value="0" className="w-[49px]" />
        <span>mm</span>
        <span className="w-[22px]">Y=</span>
        <Spin label="Y 偏移" value="0" className="w-[49px]" />
        <span>mm</span>
        <div className="h-6 w-px bg-[#888]" />
        <span className="text-black"><Check label="旋转" /></span>
        <Spin label="旋转角度" value="0.000" className="w-[62px]" />
        <span>°</span>
      </div>
      <div className="flex h-full items-center gap-[2px] border-x border-[#ccc] pr-1">
        <Grip />
        <Tool icon="ortho" label="正交" />
        <Tool icon="cross" label="交点" />
        <Tool icon="foot" label="垂点" active />
        <Tool icon="mid" label="中点" active />
        <Tool icon="vertex" label="顶点" />
        <Tool icon="coord" label="坐标" />
      </div>
    </div>
  )
}

function StatusBar() {
  return (
    <footer className="flex h-[26px] shrink-0 items-center overflow-hidden border-t border-[#ccc] leading-5 whitespace-nowrap">
      <div className="-ml-[23px] w-[188px] shrink-0"><Mix>X=-2082 Y=7062</Mix></div>
      <div className="w-[100px] shrink-0 border-l border-[#ccc] pl-[2px]"><Mix>层高:4.2m</Mix></div>
      <div className="w-[162px] shrink-0 border-l border-[#ccc] pl-[2px]"><Mix>建筑底标高:-0.1m</Mix></div>
      <div className="w-[63px] shrink-0 border-x border-[#ccc] pl-[2px]"><Mix>1(9)</Mix></div>
      <div className="w-[313px] shrink-0" />
      <div className="flex-1 border-l border-[#ccc] pl-px"><Mix>按鼠标左键选择图元，或拉框选择，按右键中止或ESC键取消</Mix></div>
    </footer>
  )
}

// A line that widens from its tail towards the head
function Arrow({ from, to }) {
  const [x1, y1] = from
  const [x2, y2] = to
  const len = Math.hypot(x2 - x1, y2 - y1)
  const ux = (x2 - x1) / len
  const uy = (y2 - y1) / len
  const at = (along, side) => `${x1 + ux * along - uy * side},${y1 + uy * along + ux * side}`
  const points = [at(0, -1), at(len - 20, -5), at(len - 23, -11), at(len, 0), at(len - 23, 11), at(len - 20, 5), at(0, 1)]
  return <polygon points={points.join(' ')} fill={RED} />
}

function Markup() {
  return (
    <svg className="pointer-events-none absolute inset-0 z-20 h-full w-full">
      <g fill="none" stroke={RED} strokeWidth="7">
        <rect x="51" y="300.500" width="57" height="38" />
        <rect x="432.500" y="38.500" width="119" height="8" />
        <rect x="1005" y="279" width="108" height="110" />
        <rect x="136.500" y="932.500" width="123" height="35" />
      </g>
      <Arrow from={[97, 327]} to={[461, 57]} />
      <Arrow from={[502, 55]} to={[995, 275]} />
      <Arrow from={[267, 936]} to={[994, 390]} />
    </svg>
  )
}

export default function App() {
  return (
    <div className={clsx('relative flex h-screen flex-col overflow-hidden bg-[#f0f0f0] text-[15px] text-black', CJK)}>
      <svg className="absolute size-0">
        <linearGradient id="gold" x1="0" y1="0" x2="1" y2="1">
          <stop offset="0" stopColor="#fff0a8" />
          <stop offset="1" stopColor="#e0a020" />
        </linearGradient>
      </svg>
      <TopToolbar />
      <main className="flex min-h-0 flex-1">
        <NavPanel />
        <ListPanel />
        <section className="flex min-w-0 flex-1 flex-col">
          <DrawBars />
          <div className="flex min-h-0 flex-1">
            <EditStrip />
            <div className="relative flex-1">
              <Drawing />
              <QuantityDialog />
            </div>
          </div>
          <SnapBar />
        </section>
      </main>
      <StatusBar />
      <Markup />
    </div>
  )
}
